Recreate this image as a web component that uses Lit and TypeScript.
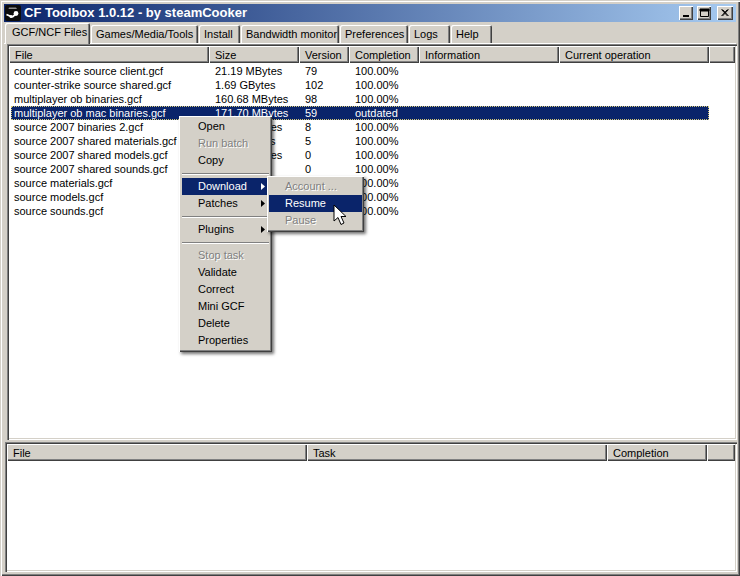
import { LitElement, html, css, svg } from "lit";
import { customElement } from "lit/decorators.js";

const rows = [
  ["counter-strike source client.gcf", "21.19 MBytes", "79", "100.00%"],
  ["counter-strike source shared.gcf", "1.69 GBytes", "102", "100.00%"],
  ["multiplayer ob binaries.gcf", "160.68 MBytes", "98", "100.00%"],
  ["multiplayer ob mac binaries.gcf", "171.70 MBytes", "59", "outdated"],
  ["source 2007 binaries 2.gcf", "12.41 MBytes", "8", "100.00%"],
  ["source 2007 shared materials.gcf", "1.01 GBytes", "5", "100.00%"],
  ["source 2007 shared models.gcf", "65.30 MBytes", "0", "100.00%"],
  ["source 2007 shared sounds.gcf", "1.2 GBytes", "0", "100.00%"],
  ["source materials.gcf", "2.0 GBytes", "0", "100.00%"],
  ["source models.gcf", "1.1 GBytes", "0", "100.00%"],
  ["source sounds.gcf", "1.4 GBytes", "0", "100.00%"],
];
const tabs = ["Games/Media/Tools", "Install", "Bandwidth monitor", "Preferences", "Logs", "Help"];
const topHead = ["File", "Size", "Version", "Completion", "Information", "Current operation", ""];
const lowHead = ["File", "Task", "Completion", ""];
type Item = { t?: string; off?: boolean; sel?: boolean; sub?: boolean };
const menu: Item[] = [
  { t: "Open" }, { t: "Run batch", off: true }, { t: "Copy" }, {},
  { t: "Download", sel: true, sub: true }, { t: "Patches", sub: true }, {},
  { t: "Plugins", sub: true }, {},
  { t: "Stop task", off: true }, { t: "Validate" }, { t: "Correct" }, { t: "Mini GCF" }, { t: "Delete" }, { t: "Properties" },
];
const subMenu: Item[] = [{ t: "Account ...", off: true }, { t: "Resume", sel: true }, { t: "Pause", off: true }];

@customElement("app-root")
export class AppRoot extends LitElement {
  static styles = css`
    :host {
      display: flex; flex-direction: column; position: relative; box-sizing: border-box;
      width: 740px; height: 576px; overflow: hidden; padding: 4px 4px 4px 4px;
      background: #d4d0c8; color: #000;
      font: 11px/14px "Liberation Sans", Arial, sans-serif;
      box-shadow: inset 1px 1px 0 #d4d0c8, inset 2px 2px 0 #fff, inset -1px -1px 0 #404040, inset -2px -2px 0 #808080;
    }
    .title {
      height: 18px; flex: none; display: flex; align-items: center; padding: 0 3px 0 1px; gap: 3px;
      background: linear-gradient(90deg, #0a246a, #a6caf0); color: #fff;
      font: bold 13px/18px "Liberation Sans", sans-serif;
    }
    .logo { width: 16px; height: 16px; flex: none; }
    .title span { flex: 1; }
    .wbtn {
      width: 14px; height: 14px; flex: none; background: #d4d0c8; padding: 0; border: 0;
      box-shadow: inset 1px 1px 0 #fff, inset -1px -1px 0 #404040, inset -2px -2px 0 #808080;
      display: block;
    }
    .wbtn svg { display: block; }
    .wbtn.close { margin-left: 3px; width: 16px; }
    .wbtn.min { margin-right: 1px; }
    .tabs { height: 21px; flex: none; display: flex; align-items: flex-end; padding-left: 1px; position: relative; z-index: 1; }
    .tab {
      box-sizing: border-box; height: 18px; padding: 2px 0 0 5px; margin-right: 1px; white-space: nowrap;
      background: #d4d0c8; border-radius: 2px 2px 0 0;
      box-shadow: inset 1px 1px 0 #fff, inset -1px 0 0 #404040, inset -2px 0 0 #808080;
    }
    .tab.on { height: 21px; margin-bottom: -1px; padding: 2px 0 0 7px; }
    .page {
      flex: 1; min-height: 0; display: flex; flex-direction: column;
      box-shadow: inset 0 1px 0 #fff;
    }
    .list {
      flex: none; display: flex; flex-direction: column; background: #fff; box-sizing: border-box;
      box-shadow: inset 1px 1px 0 #808080, inset 2px 2px 0 #404040, inset -1px -1px 0 #fff, inset -2px -2px 0 #d4d0c8;
      padding: 2px;
    }
    .list.top { height: 396px; margin: 1px -1px 0 3px; }
    .list.low { height: 130px; margin: 2px -1px 0 1px; }
    .head { display: grid; height: 17px; flex: none; }
    .top .head { grid-template-columns: 200px 90px 50px 70px 140px 150px 1fr; }
    .low .head { grid-template-columns: 300px 300px 100px 1fr; }
    .hcell {
      background: #d4d0c8; padding: 2px 0 0 6px; line-height: 14px; white-space: nowrap; overflow: hidden;
      box-shadow: inset 1px 1px 0 #fff, inset -1px -1px 0 #404040, inset -2px -2px 0 #808080;
    }
    .body { padding: 1px 0 0 2px; }
    .row { display: grid; grid-template-columns: 198px 90px 50px 70px 140px 148px; height: 14px; line-height: 14px; width: 698px; white-space: nowrap; }
    .row div { padding-left: 6px; overflow: hidden; }
    .row div:first-child { padding-left: 3px; }
    .row.sel { background: #0a246a; color: #fff; outline: 1px dotted #d4c878; outline-offset: -1px; }
    .menu {
      position: absolute; box-sizing: border-box; background: #d4d0c8; z-index: 5;
      box-shadow: inset 1px 1px 0 #fff, inset -1px -1px 0 #404040, inset -2px -2px 0 #808080, 2px 2px 3px rgba(0,0,0,.55);
      padding: 2px 3px;
    }
    .menu.main { left: 179px; top: 116px; width: 93px; height: 236px; }
    .menu.sub { left: 267px; top: 176px; width: 97px; height: 56px; z-index: 6; padding: 2px; }
    .item { height: 17px; line-height: 17px; padding-left: 16px; position: relative; white-space: nowrap; }
    .item.off { color: #808080; text-shadow: 1px 1px 0 #fff; }
    .item.sel { background: #0a246a; color: #fff; }
    .item .arr { position: absolute; right: 4px; top: 5px; width: 4px; height: 7px; }
    .sep { height: 9px; display: flex; align-items: center; }
    .sep i { display: block; width: 100%; height: 2px; background: linear-gradient(#808080 50%, #fff 50%); }
    .cursor { position: absolute; left: 333px; top: 204px; z-index: 7; display: block; }
  `;

  private itemTpl(m: Item) {
    if (!m.t) return html`<div class="sep"><i></i></div>`;
    return html`<div class="item ${m.off ? "off" : ""} ${m.sel ? "sel" : ""}">${m.t}${m.sub
      ? html`<svg class="arr" viewBox="0 0 4 7"><path d="M0 0L4 3.5L0 7Z" fill="${m.sel ? "#fff" : "#000"}"/></svg>` : ""}</div>`;
  }

  render() {
    return html`
      <div class="title">
        <svg class="logo" viewBox="0 0 16 16">
          <rect width="16" height="16" rx="2" fill="#0c0c0c"/>
          <path d="M4 2.5h7l1 1.5H3.5z" fill="#8a8a8a"/>
          <path d="M1.5 9.5L6 11.5A2.5 2.5 0 0 0 9 10.5L11.5 8.5" stroke="#fff" stroke-width="1.8" fill="none"/>
          <circle cx="11" cy="8.5" r="2.4" fill="#fff"/>
          <circle cx="6" cy="11.5" r="1.5" fill="#fff"/>
        </svg>
        <span>CF Toolbox 1.0.12 - by steamCooker</span>
        <button class="wbtn min"><svg width="14" height="14"><rect x="4" y="9" width="6" height="2" fill="#000"/></svg></button>
        <button class="wbtn"><svg width="14" height="14"><path d="M3.5 3.5h8v7h-8z M3 3h9v2H3z" fill="none" stroke="#000"/><rect x="3" y="3" width="9" height="2" fill="#000"/></svg></button>
        <button class="wbtn close"><svg width="16" height="14"><path d="M4.5 3.5L10.5 10M5.5 3.5L11.5 10M10.5 3.5L4.5 10M11.5 3.5L5.5 10" stroke="#000" fill="none"/></svg></button>
      </div>
      <div class="tabs">
        <div class="tab on" style="width:85px">GCF/NCF Files</div>
        ${tabs.map((t, i) => html`<div class="tab" style="width:${[107, 41, 98, 68, 41, 41][i]}px">${t}</div>`)}
      </div>
      <div class="page">
        <div class="list top">
          <div class="head">${topHead.map((h) => html`<div class="hcell">${h}</div>`)}</div>
          <div class="body">
            ${rows.map((r, i) => html`<div class="row ${i === 3 ? "sel" : ""}">${r.map((c) => html`<div>${c}</div>`)}</div>`)}
          </div>
        </div>
        <div class="list low">
          <div class="head">${lowHead.map((h) => html`<div class="hcell">${h}</div>`)}</div>
        </div>
      </div>
      <div class="menu main">${menu.map((m) => this.itemTpl(m))}</div>
      <div class="menu sub">${subMenu.map((m) => this.itemTpl(m))}</div>
      <svg class="cursor" width="14" height="22" viewBox="0 0 14 22">
        <path d="M1 1V17L5 13.5L8 20.5L11 19L8 12.5H13Z" fill="#fff" stroke="#000" stroke-width="1"/>
      </svg>
    `;
  }
}
